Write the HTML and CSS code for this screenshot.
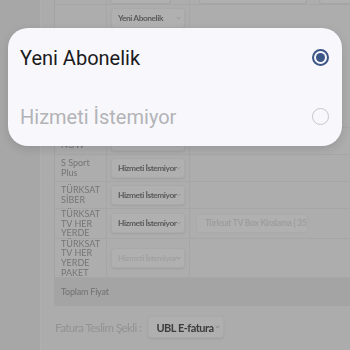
FILE: index.html
```html
<!DOCTYPE html>
<html lang="tr">
<head>
<meta charset="utf-8">
<link rel="stylesheet" href="styles.css">
</head>
<body>
<div class="screen">
  <div class="page">
    <aside class="side"></aside>
    <main class="card">
      <div class="table">
        <div class="row row-top">
          <div class="cell label"></div>
          <div class="cell ctrl"><span class="stub stub-a"></span></div>
          <div class="cell extra"><span class="stub stub-b"></span><span class="stub stub-c"></span></div>
        </div>
        <div class="row row-tall">
          <div class="cell label"></div>
          <div class="cell ctrl ctrl-top">
            <div class="select">Yeni Abonelik <svg class="chev" viewBox="0 0 6 4"><path d="M0.8 0.8 L3 3 L5.2 0.8"/></svg></div>
          </div>
          <div class="cell extra"></div>
        </div>
        <div class="row">
          <div class="cell label label-now">NOW</div>
          <div class="cell ctrl"><div class="select"></div></div>
          <div class="cell extra"></div>
        </div>
        <div class="row">
          <div class="cell label">S Sport Plus</div>
          <div class="cell ctrl"><div class="select">Hizmeti İstemiyor <svg class="chev" viewBox="0 0 6 4"><path d="M0.8 0.8 L3 3 L5.2 0.8"/></svg></div></div>
          <div class="cell extra"></div>
        </div>
        <div class="row">
          <div class="cell label">TÜRKSAT SİBER</div>
          <div class="cell ctrl"><div class="select">Hizmeti İstemiyor <svg class="chev" viewBox="0 0 6 4"><path d="M0.8 0.8 L3 3 L5.2 0.8"/></svg></div></div>
          <div class="cell extra"></div>
        </div>
        <div class="row">
          <div class="cell label">TÜRKSAT TV HER YERDE</div>
          <div class="cell ctrl"><div class="select">Hizmeti İstemiyor <svg class="chev" viewBox="0 0 6 4"><path d="M0.8 0.8 L3 3 L5.2 0.8"/></svg></div></div>
          <div class="cell extra"><div class="btn-disabled">Türksat TV Box Kiralama ( 35</div></div>
        </div>
        <div class="row">
          <div class="cell label">TÜRKSAT TV HER YERDE PAKET</div>
          <div class="cell ctrl"><div class="select disabled">Hizmeti İstemiyor <svg class="chev" viewBox="0 0 6 4"><path d="M0.8 0.8 L3 3 L5.2 0.8"/></svg></div></div>
          <div class="cell extra"></div>
        </div>
        <div class="total">Toplam Fiyat</div>
      </div>
      <div class="invoice">
        <span class="invoice-label">Fatura Teslim Şekli :</span>
        <div class="select big">UBL E-fatura<svg class="chev" viewBox="0 0 6 4"><path d="M0.8 0.8 L3 3 L5.2 0.8"/></svg></div>
      </div>
    </main>
  </div>

  <div class="sheet">
    <div class="option">
      <span class="option-text">Yeni Abonelik</span>
      <span class="radio checked"></span>
    </div>
    <div class="option muted">
      <span class="option-text">Hizmeti İstemiyor</span>
      <span class="radio"></span>
    </div>
  </div>
</div>
</body>
</html>
```

FILE: styles.css
```css
* { box-sizing: border-box; }
html, body { margin: 0; padding: 0; }
body {
  font-family: Lato, "Open Sans", sans-serif;
  background: #a7a7a7;
}
.screen {
  position: relative;
  width: 350px;
  height: 350px;
  overflow: hidden;
  background: #a7a7a7;
}
.page {
  display: flex;
  height: 100%;
  filter: blur(0.35px);
}
.side { width: 40px; flex: none; }
.card {
  flex: 1;
  background: #acacac;
  border-left: 1px solid #b0b0b0;
  padding: 0 0 0 13px;
  min-width: 0;
}
.table {
  border-left: 1px solid #a3a3a3;
  border-bottom: 1px solid #a3a3a3;
  border-radius: 0 0 0 4px;
  background: #adadad;
  overflow: hidden;
}
.row {
  display: grid;
  grid-template-columns: 52px 83px 1fr;
  border-bottom: 1px solid #a6a6a6;
}
.cell { display: flex; align-items: center; }
.label {
  padding: 0 4px 0 6px;
  font-size: 9px;
  line-height: 9.6px;
  color: #757575;
  border-right: 1px solid #a6a6a6;
}
.label-now { align-items: flex-end; padding-bottom: 4px; }
.ctrl {
  padding: 3px 4px;
  border-right: 1px solid #a6a6a6;
}
.ctrl-top { align-items: flex-start; }
.extra { padding-left: 6px; }
.row-top { height: 5px; }
.row-top .cell { align-items: flex-end; padding: 0; }
.row-tall { height: 123px; }
.stub {
  display: block;
  height: 4px;
  background: #b0b0b0;
  border: 1px solid #a4a4a4;
  border-top: none;
  border-radius: 0 0 3px 3px;
}
.stub-a { width: 61px; margin-left: 3px; }
.stub-b { width: 108px; margin-left: 9px; }
.stub-c { flex: 1; margin-left: 12px; border-right: none; border-radius: 0 0 0 3px; }
.row-top .extra { padding-left: 0; }

.select {
  width: 74px;
  height: 20px;
  background: #b0b0b0;
  border: 1px solid #a9a9a9;
  border-radius: 3px;
  box-shadow: 0 1px 2px rgba(0,0,0,0.08);
  font-size: 8.4px;
  font-weight: 700;
  letter-spacing: -0.45px;
  color: #5a5a5a;
  display: flex;
  align-items: center;
  justify-content: space-between;
  padding: 0 3px 0 6px;
  white-space: nowrap;
}
.select.disabled { color: #a1a1a1; }
.chev {
  width: 5px;
  height: 4px;
  flex: none;
  fill: none;
  stroke: #8a8a8a;
  stroke-width: 0.9;
}
.btn-disabled {
  width: 112px;
  height: 19px;
  background: #b0b0b0;
  border: 1px solid #a9a9a9;
  border-radius: 3px;
  font-size: 8.6px;
  font-weight: 700;
  letter-spacing: -0.3px;
  color: #9d9d9d;
  display: flex;
  align-items: center;
  padding-left: 8px;
  white-space: nowrap;
}
.total {
  height: 27px;
  background: #a4a4a4;
  display: flex;
  align-items: center;
  padding-left: 6px;
  font-size: 9px;
  letter-spacing: -0.2px;
  color: #707070;
}
.invoice {
  display: flex;
  align-items: center;
  gap: 7px;
  margin-top: 10px;
  padding-left: 1px;
}
.invoice-label {
  font-size: 11.5px;
  letter-spacing: -0.55px;
  color: #929292;
}
.select.big {
  width: auto;
  height: 22px;
  gap: 1px;
  font-size: 11px;
  letter-spacing: -0.5px;
  color: #3c3c3c;
  padding: 0 3px 0 7px;
  background: #afafaf;
}
.select.big .chev { stroke: #707070; }

.sheet {
  position: absolute;
  left: 8px;
  top: 28px;
  width: 334px;
  background: #f8f8fc;
  border-radius: 20px;
  box-shadow: 0 3px 10px rgba(0,0,0,0.12);
  font-family: Roboto, "Noto Sans", sans-serif;
}
.option {
  height: 59px;
  display: flex;
  align-items: center;
  justify-content: space-between;
  padding: 0 13px 0 12px;
  font-size: 20px;
  color: #1b1b1d;
}
.option.muted { color: #b3b3b7; }
.radio {
  width: 17px;
  height: 17px;
  border-radius: 50%;
  border: 1.5px solid #c6c6ca;
  display: flex;
  align-items: center;
  justify-content: center;
}
.radio.checked { border: 2px solid #3d5688; }
.radio.checked::after {
  content: "";
  width: 9px;
  height: 9px;
  border-radius: 50%;
  background: #3d5688;
}
```
